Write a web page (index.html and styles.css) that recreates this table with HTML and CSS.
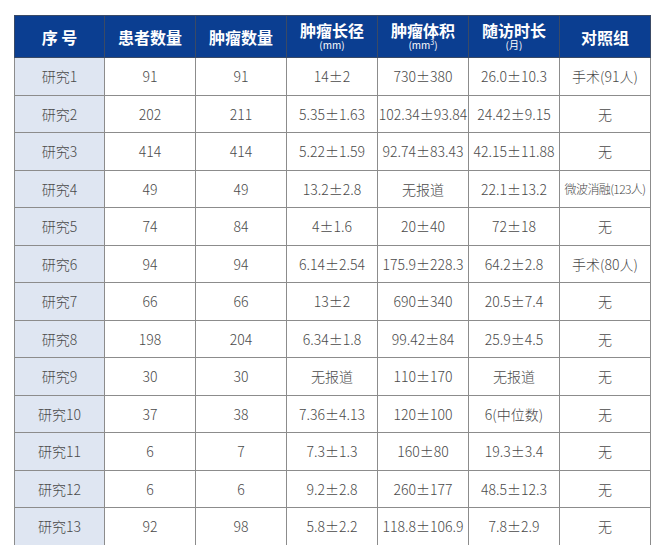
FILE: index.html
```html
<!DOCTYPE html>
<html lang="zh">
<head>
<meta charset="utf-8">
<link rel="stylesheet" href="styles.css">
</head>
<body>
<table class="data">
  <colgroup>
    <col class="c-first"><col class="c"><col class="c"><col class="c"><col class="c"><col class="c"><col class="c">
  </colgroup>
  <thead>
    <tr>
      <th>序 号</th>
      <th>患者数量</th>
      <th>肿瘤数量</th>
      <th><div class="h">肿瘤长径</div><div class="sub">(mm)</div></th>
      <th><div class="h">肿瘤体积</div><div class="sub">(mm<sup>3</sup>)</div></th>
      <th><div class="h">随访时长</div><div class="sub">(月)</div></th>
      <th>对照组</th>
    </tr>
  </thead>
  <tbody>
    <tr><td class="first">研究1</td><td>91</td><td>91</td><td>14±2</td><td>730±380</td><td>26.0±10.3</td><td>手术(91人)</td></tr>
    <tr><td class="first">研究2</td><td>202</td><td>211</td><td>5.35±1.63</td><td>102.34±93.84</td><td>24.42±9.15</td><td>无</td></tr>
    <tr><td class="first">研究3</td><td>414</td><td>414</td><td>5.22±1.59</td><td>92.74±83.43</td><td>42.15±11.88</td><td>无</td></tr>
    <tr><td class="first">研究4</td><td>49</td><td>49</td><td>13.2±2.8</td><td>无报道</td><td>22.1±13.2</td><td class="small">微波消融(123人)</td></tr>
    <tr><td class="first">研究5</td><td>74</td><td>84</td><td>4±1.6</td><td>20±40</td><td>72±18</td><td>无</td></tr>
    <tr><td class="first">研究6</td><td>94</td><td>94</td><td>6.14±2.54</td><td>175.9±228.3</td><td>64.2±2.8</td><td>手术(80人)</td></tr>
    <tr><td class="first">研究7</td><td>66</td><td>66</td><td>13±2</td><td>690±340</td><td>20.5±7.4</td><td>无</td></tr>
    <tr><td class="first">研究8</td><td>198</td><td>204</td><td>6.34±1.8</td><td>99.42±84</td><td>25.9±4.5</td><td>无</td></tr>
    <tr><td class="first">研究9</td><td>30</td><td>30</td><td>无报道</td><td>110±170</td><td>无报道</td><td>无</td></tr>
    <tr><td class="first">研究10</td><td>37</td><td>38</td><td>7.36±4.13</td><td>120±100</td><td>6(中位数)</td><td>无</td></tr>
    <tr><td class="first">研究11</td><td>6</td><td>7</td><td>7.3±1.3</td><td>160±80</td><td>19.3±3.4</td><td>无</td></tr>
    <tr><td class="first">研究12</td><td>6</td><td>6</td><td>9.2±2.8</td><td>260±177</td><td>48.5±12.3</td><td>无</td></tr>
    <tr><td class="first">研究13</td><td>92</td><td>98</td><td>5.8±2.2</td><td>118.8±106.9</td><td>7.8±2.9</td><td>无</td></tr>
  </tbody>
</table>
</body>
</html>
```
FILE: styles.css
```css
html, body {
  margin: 0;
  padding: 0;
  background: #ffffff;
}
body {
  font-family: "Noto Sans CJK SC", "Noto Sans", sans-serif;
  padding: 15px 0 0 14px;
}
.data {
  border-collapse: collapse;
  table-layout: fixed;
  width: 637px;
}
.c-first { width: 90px; }
.c { width: 91px; }
.data thead tr { height: 42px; }
.data tbody tr { height: 37.5px; }
.data th {
  background: #0b3e91;
  color: #ffffff;
  font-weight: 700;
  font-size: 16px;
  padding: 0;
  border: 1px solid #3a4a66;
  text-align: center;
  vertical-align: middle;
  line-height: 18px;
}
.data th .h {
  line-height: 18px;
  margin-top: -2px;
}
.data th .sub {
  font-size: 10px;
  font-weight: 400;
  line-height: 12px;
}
.data th sup {
  font-size: 7px;
  vertical-align: 4px;
  line-height: 0;
}
.data td {
  padding: 0;
  border: 1px solid #8c8c8c;
  text-align: center;
  vertical-align: middle;
  font-size: 14px;
  font-weight: 300;
  line-height: 16px;
  color: #4a4a4a;
  white-space: nowrap;
  overflow: hidden;
}
.data td.first {
  background: #dfe6f2;
}
.data td.small {
  font-size: 12px;
  letter-spacing: -0.6px;
}
```
